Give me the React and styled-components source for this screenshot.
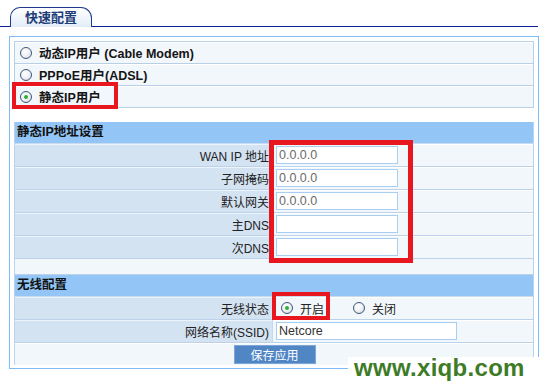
import React from "react";
import styled, { createGlobalStyle, css } from "styled-components";

const GlobalStyle = createGlobalStyle`
  html, body {
    margin: 0;
    padding: 0;
    background: #ffffff;
  }
  body {
    font-family: "Liberation Sans", "Noto Sans CJK SC", sans-serif;
    font-size: 12px;
    color: #1e1e1e;
  }
`;

const Page = styled.div`
  position: relative;
  width: 550px;
  height: 381px;
  overflow: hidden;
`;

const TabBar = styled.div`
  display: flex;
  align-items: flex-end;
  box-sizing: border-box;
  width: 538px;
  height: 27px;
  padding: 7px 0 0 10px;
  border-bottom: 1px solid #0b2396;
`;

const Tab = styled.div`
  box-sizing: border-box;
  width: 82px;
  height: 20px;
  margin-bottom: -1px;
  border: 1px solid #1d3a8c;
  border-bottom: none;
  border-radius: 10px 11px 0 0;
  background: linear-gradient(#ffffff, #e3edf8);
  color: #1f3d78;
  font-weight: bold;
  font-size: 13px;
  line-height: 19px;
  text-align: center;
`;

const Panel = styled.div`
  box-sizing: border-box;
  width: 530px;
  margin: 9px 0 0 9px;
  padding: 4px 4px 3px 4px;
  border: 1px solid #7dbcf7;
`;

const ChoiceTable = styled.div`
  border: 1px solid #b9cfe6;
`;

const ChoiceRow = styled.label`
  display: flex;
  align-items: center;
  gap: 7px;
  height: 21px;
  padding-left: 5px;
  background: #f2f7fc;
  box-shadow: inset 0 1px 0 #ffffff;
  border-bottom: 1px solid #b9cfe6;
  font-weight: bold;
  font-size: 12.5px;
  color: #151515;
  &:last-child {
    border-bottom: none;
  }
`;

const RadioMark = styled.span`
  position: relative;
  flex: none;
  box-sizing: border-box;
  width: 12px;
  height: 12px;
  border-radius: 50%;
  border: 1px solid #3d5777;
  background: radial-gradient(circle at 40% 35%, #ffffff 0%, #eceff3 55%, #c6ced7 100%);
  ${(p) =>
    p.$checked &&
    css`
      &::after {
        content: "";
        position: absolute;
        left: 3px;
        top: 3px;
        width: 4px;
        height: 4px;
        border-radius: 50%;
        background: #2fae34;
      }
    `}
`;

const ConfigTable = styled.div`
  margin-top: 14px;
  border-left: 1px solid #bcd2ea;
  border-right: 1px solid #bcd2ea;
`;

const SectionHead = styled.div`
  height: 21px;
  line-height: 21px;
  padding-left: 2px;
  background: #93c6f7;
  border-bottom: 1px solid #c9dcef;
  font-weight: bold;
  font-size: 12.5px;
  color: #111;
`;

const Row = styled.div`
  display: grid;
  grid-template-columns: 257px 1fr;
  height: 23px;
  box-sizing: border-box;
  border-bottom: 1px solid #bcd2ea;
`;

const LabelCell = styled.div`
  display: flex;
  align-items: center;
  justify-content: flex-end;
  padding-right: 3px;
  background: #d4e3f2;
  box-shadow: inset 0 1px 0 #eef4fb;
  color: #222;
`;

const ValueCell = styled.div`
  display: flex;
  align-items: center;
  padding-left: 3px;
  background: #f2f7fc;
  border-left: 1px solid #c6d9ec;
  box-shadow: inset 0 1px 0 #ffffff;
`;

const Spacer = styled.div`
  height: 15px;
  background: #f2f7fc;
  border-bottom: 1px solid #bcd2ea;
`;

const FullCell = styled.div`
  display: flex;
  align-items: center;
  justify-content: center;
  height: 22px;
  background: #f2f7fc;
  box-shadow: inset 0 1px 0 #ffffff;
`;

const TextInput = styled.input`
  box-sizing: border-box;
  width: ${(p) => p.$w || 122}px;
  height: 18px;
  margin: 0;
  padding: 0 2px;
  border: 1px solid #a8cff3;
  background: #ffffff;
  font-family: "Liberation Sans", sans-serif;
  font-size: 12.5px;
  color: ${(p) => (p.$dark ? "#333" : "#6a6a6a")};
  outline: none;
`;

const Option = styled.label`
  display: inline-flex;
  align-items: center;
  gap: 7px;
  width: ${(p) => p.$w}px;
  margin-left: ${(p) => p.$ml || 0}px;
  color: #222;
`;

const SaveButton = styled.button`
  box-sizing: border-box;
  width: 82px;
  height: 19px;
  margin: 0 0 0 1px;
  padding: 0;
  border: 1px solid #7ea7d8;
  background: #5186c5;
  color: #ffffff;
  font-family: "Liberation Sans", "Noto Sans CJK SC", sans-serif;
  font-size: 12px;
`;

const Mark = styled.div`
  position: absolute;
  box-sizing: border-box;
  border: ${(p) => p.$t || 4}px solid #e8161e;
  left: ${(p) => p.$x}px;
  top: ${(p) => p.$y}px;
  width: ${(p) => p.$w}px;
  height: ${(p) => p.$h}px;
  pointer-events: none;
`;

const Watermark = styled.div`
  position: absolute;
  left: 348px;
  top: 357px;
  width: 200px;
  height: 24px;
  padding-left: 6px;
  box-sizing: border-box;
  background: #ffffff;
  color: #3e7b27;
  font-family: "Liberation Sans", sans-serif;
  font-weight: bold;
  font-size: 24px;
  line-height: 22px;
  letter-spacing: 0.3px;
  white-space: nowrap;
`;

const choices = [
  { label: "动态IP用户 (Cable Modem)" },
  { label: "PPPoE用户(ADSL)" },
  { label: "静态IP用户", checked: true },
];

const ipFields = [
  { label: "WAN IP 地址", value: "0.0.0.0" },
  { label: "子网掩码", value: "0.0.0.0" },
  { label: "默认网关", value: "0.0.0.0" },
  { label: "主DNS", value: "" },
  { label: "次DNS", value: "" },
];

export default function App() {
  return (
    <Page>
      <GlobalStyle />
      <TabBar>
        <Tab>快速配置</Tab>
      </TabBar>
      <Panel>
        <ChoiceTable>
          {choices.map((c) => (
            <ChoiceRow key={c.label}>
              <RadioMark $checked={c.checked} />
              {c.label}
            </ChoiceRow>
          ))}
        </ChoiceTable>

        <ConfigTable>
          <SectionHead>静态IP地址设置</SectionHead>
          {ipFields.map((f) => (
            <Row key={f.label}>
              <LabelCell>{f.label}</LabelCell>
              <ValueCell>
                <TextInput defaultValue={f.value} />
              </ValueCell>
            </Row>
          ))}
          <Spacer />
          <SectionHead>无线配置</SectionHead>
          <Row>
            <LabelCell>无线状态</LabelCell>
            <ValueCell>
              <Option $w={72} $ml={5}>
                <RadioMark $checked />
                开启
              </Option>
              <Option $w={60}>
                <RadioMark />
                关闭
              </Option>
            </ValueCell>
          </Row>
          <Row>
            <LabelCell>网络名称(SSID)</LabelCell>
            <ValueCell>
              <TextInput $w={181} $dark defaultValue="Netcore" />
            </ValueCell>
          </Row>
          <FullCell>
            <SaveButton>保存应用</SaveButton>
          </FullCell>
        </ConfigTable>
      </Panel>

      <Mark $x={12} $y={82} $w={106} $h={27} />
      <Mark $x={269} $y={140} $w={144} $h={123} $t={5} />
      <Mark $x={272} $y={292} $w={58} $h={28} />
      <Watermark>www.xiqb.com</Watermark>
    </Page>
  );
}
